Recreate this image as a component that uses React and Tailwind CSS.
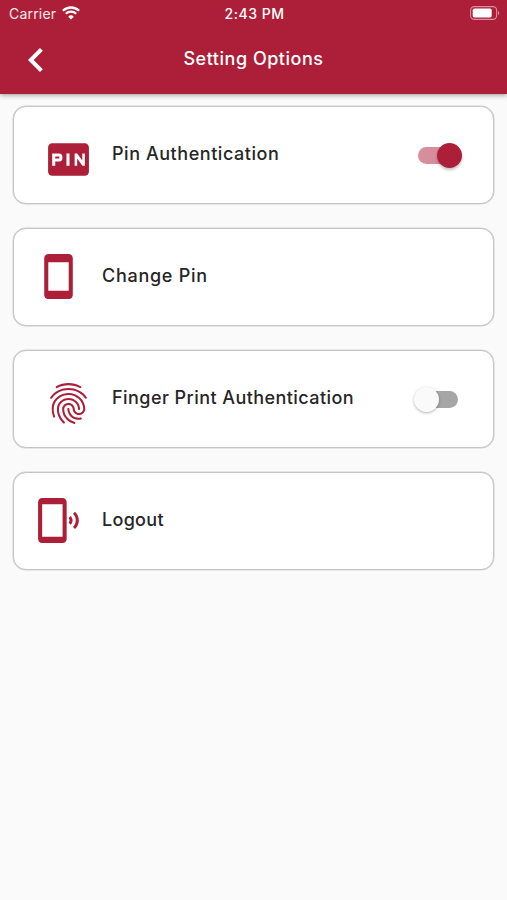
import { MdFiberPin, MdFingerprint, MdPhonelinkRing, MdStayCurrentPortrait } from 'react-icons/md';

function StatusBar() {
  return (
    <div className="flex h-[27px] items-center pl-[9px] pr-[7px] text-white">
      <div className="flex flex-1 items-center gap-[6px]">
        <span className="text-[14px] leading-[27px] tracking-[0.2px] text-white/90">Carrier</span>
        <svg className="-mt-px" width="18" height="14" viewBox="0 0 18 14" fill="none" stroke="white" strokeWidth="2.3">
          <path d="M0.9 4.8a11.6 11.6 0 0 1 16.2 0" />
          <path d="M3.8 7.8a7.4 7.4 0 0 1 10.4 0" />
          <path d="M9 13.6L6.2 10.7a4 4 0 0 1 5.6 0Z" fill="white" stroke="none" />
        </svg>
      </div>
      <span className="text-[14px] font-medium leading-[27px] tracking-[0.5px]">2:43 PM</span>
      <div className="flex flex-1 justify-end">
        <svg className="-mt-[1px]" width="30" height="14" viewBox="0 0 30 14" fill="none">
          <rect x="0.6" y="0.6" width="26" height="12.8" rx="3.6" stroke="white" strokeOpacity="0.5" strokeWidth="1.1" />
          <rect x="2.7" y="2.6" width="19" height="8.8" rx="1.6" fill="white" />
          <path d="M28 5v4c1.7-.7 1.7-3.3 0-4Z" fill="white" fillOpacity="0.5" />
        </svg>
      </div>
    </div>
  );
}

function Switch({ on }) {
  return on ? (
    <div className="mt-[-1px] flex h-[26px] w-[46px] items-center">
      <div className="flex h-[17px] w-[40px] items-center justify-end rounded-full bg-[#d68e9c]">
        <div className="-mr-[4px] size-[25px] shrink-0 rounded-full bg-[#ad1f38] shadow-[0_2px_3px_rgba(0,0,0,0.25)]" />
      </div>
    </div>
  ) : (
    <div className="mt-[-1px] flex h-[26px] w-[46px] items-center">
      <div className="flex h-[17px] w-[40px] items-center rounded-full bg-[#a6a6a6]">
        <div className="-ml-[4px] size-[25px] shrink-0 rounded-full bg-[#fafafa] shadow-[0_1px_3px_rgba(0,0,0,0.3)]" />
      </div>
    </div>
  );
}

const card = 'flex h-[98px] rounded-[13px] border border-[#c6c6c6] bg-white text-[#262626] shadow-[0_0_0_0.5px_#d0d0d0]';
const label = 'text-[18px] font-[450] leading-[26px] whitespace-nowrap';

export default function App() {
  return (
    <div className="min-h-[900px] w-[507px] bg-[#fafafa] font-['Inter','Liberation_Sans',sans-serif]">
      <header className="h-[94px] bg-[#ad1f38] shadow-[0_1px_5px_rgba(0,0,0,0.4)]">
        <StatusBar />
        <div className="flex h-[64px] items-center text-white">
          <div className="w-[100px] pl-[27px]">
            <svg className="mt-px" width="17" height="26" viewBox="0 0 17 26" fill="none" stroke="white" strokeWidth="4">
              <path d="M14.4 2.4L3.8 13L14.4 23.6" />
            </svg>
          </div>
          <h1 className="flex-1 text-center text-[18px] font-medium tracking-[0.52px] leading-[26px]">Setting Options</h1>
          <div className="w-[100px]" />
        </div>
      </header>

      <main className="flex flex-col gap-[24px] px-[13px] pt-[12px]">
        <section className={card}>
          <MdFiberPin className="ml-[30px] mt-[28px] size-[49px] text-[#ad1f38]" />
          <span className={label + ' ml-[19px] mt-[34px] flex-1 tracking-[0.55px]'}>Pin Authentication</span>
          <div className="mr-[29px] mt-[36px]"><Switch on /></div>
        </section>
        <section className={card}>
          <MdStayCurrentPortrait className="ml-[20px] mt-[23px] size-[49px] text-[#ad1f38]" />
          <span className={label + ' ml-[19px] mt-[34px] tracking-[0.72px]'}>Change Pin</span>
        </section>
        <section className={card}>
          <MdFingerprint className="ml-[30px] mt-[28px] size-[49px] text-[#ad1f38]" />
          <span className={label + ' ml-[19px] mt-[34px] flex-1 tracking-[0.44px]'}>Finger Print Authentication</span>
          <div className="mr-[29px] mt-[36px]"><Switch on={false} /></div>
        </section>
        <section className={card}>
          <MdPhonelinkRing className="ml-[20px] mt-[23px] size-[49px] text-[#ad1f38]" />
          <span className={label + ' ml-[19px] mt-[34px] tracking-[0.3px]'}>Logout</span>
        </section>
      </main>
    </div>
  );
}
